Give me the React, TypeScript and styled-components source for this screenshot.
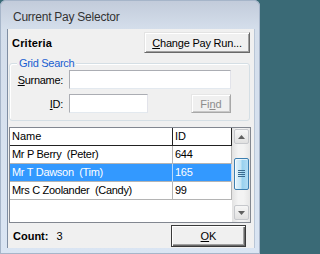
import React from "react";
import styled, { createGlobalStyle } from "styled-components";

const GlobalStyle = createGlobalStyle`
  html, body {
    margin: 0;
    padding: 0;
    background: #3a6a76;
  }
  body {
    font-family: "Liberation Sans", Arial, sans-serif;
    font-size: 11px;
    color: #000;
  }
`;

const rows = [
  { name: "Mr P Berry  (Peter)", id: "644", selected: false },
  { name: "Mr T Dawson  (Tim)", id: "165", selected: true },
  { name: "Mrs C Zoolander  (Candy)", id: "99", selected: false },
];

const App = () => {
  return (
    <>
      <GlobalStyle />
      <Window>
        <TitleBar>Current Pay Selector</TitleBar>
        <Client>
          <CriteriaRow>
            <Heading>Criteria</Heading>
            <ChangeButton>
              <u>C</u>hange Pay Run...
            </ChangeButton>
          </CriteriaRow>

          <Group>
            <Legend>Grid Search</Legend>
            <FormGrid>
              <Label>
                <u>S</u>urname:
              </Label>
              <TextBox />
              <Label>
                <u>I</u>D:
              </Label>
              <IdRow>
                <TextBox $width={79} />
                <FindButton disabled>
                  Fi<u>n</u>d
                </FindButton>
              </IdRow>
            </FormGrid>
          </Group>

          <DataGrid>
            <TableArea>
              <HeaderCell>Name</HeaderCell>
              <HeaderCell>ID</HeaderCell>
              {rows.map((r) => (
                <React.Fragment key={r.id}>
                  <Cell $selected={r.selected}>{r.name}</Cell>
                  <Cell $selected={r.selected}>{r.id}</Cell>
                </React.Fragment>
              ))}
            </TableArea>
            <ScrollBar>
              <ScrollButton>
                <Arrow direction="up" />
              </ScrollButton>
              <Thumb>
                <svg width="7" height="8" viewBox="0 0 7 8">
                  {[0, 2, 4, 6].map((y) => (
                    <rect key={y} x="0" y={y} width="7" height="1" fill="#3a6a90" />
                  ))}
                </svg>
              </Thumb>
              <ScrollButton $bottom>
                <Arrow direction="down" />
              </ScrollButton>
            </ScrollBar>
          </DataGrid>

          <Footer>
            <CountText>
              <b>Count:</b>
              <span>3</span>
            </CountText>
            <OkButton>
              <u>O</u>K
            </OkButton>
          </Footer>
        </Client>
      </Window>
    </>
  );
};

export default App;

const Arrow = ({ direction }: { direction: "up" | "down" }) => (
  <svg width="7" height="4" viewBox="0 0 7 4">
    <path
      d={direction === "up" ? "M0 4 L3.5 0 L7 4 Z" : "M0 0 L3.5 4 L7 0 Z"}
      fill="#606060"
    />
  </svg>
);

const Window = styled.div`
  width: 260px;
  height: 254px;
  box-sizing: border-box;
  display: flex;
  flex-direction: column;
  padding: 0 5px 6px 7px;
  border-radius: 6px 6px 0 0;
  background: linear-gradient(#c2cbda 0px, #d4deeb 29px, #dae5f3 100%);
  box-shadow: inset 0 0 0 1px #a6b5c9;
`;

const TitleBar = styled.div`
  height: 29px;
  box-sizing: border-box;
  padding: 9px 0 0 6px;
  font-size: 12px;
  line-height: 16px;
  letter-spacing: -0.25px;
  color: #333;
`;

const Client = styled.div`
  flex: 1;
  display: flex;
  flex-direction: column;
  background: #f0f0f0;
  border-left: 1px solid #7f8ea3;
  border-right: 1px solid #b9c6d6;
  padding: 3px 3px 1px 1px;
  min-height: 0;
`;

const CriteriaRow = styled.div`
  height: 21px;
  display: flex;
  align-items: center;
  justify-content: space-between;
  padding-left: 3px;
  margin-right: 1px;
`;

const Heading = styled.div`
  font-weight: bold;
  letter-spacing: 0.2px;
`;

const BaseButton = styled.button`
  font-family: "Liberation Sans", Arial, sans-serif;
  font-size: 11px;
  color: #000;
  background: #f0f0f0;
  border: 1px solid;
  border-color: #e3e3e3 #696969 #696969 #e3e3e3;
  box-shadow: inset 1px 1px #ffffff, inset -1px -1px #a0a0a0;
  padding: 0;
  margin: 0;
  box-sizing: border-box;
  display: flex;
  align-items: center;
  justify-content: center;
`;

const ChangeButton = styled(BaseButton)`
  width: 106px;
  height: 21px;
  letter-spacing: -0.2px;
`;

const Group = styled.div`
  position: relative;
  margin: 10px 1px 0 0;
  height: 58px;
  box-sizing: border-box;
  border: 1px solid #d5dfe5;
  border-radius: 3px;
  box-shadow: inset 1px 1px #fff;
  padding: 6px 0 7px 0;
`;

const Legend = styled.div`
  position: absolute;
  top: -8px;
  left: 7px;
  padding: 0 2px;
  background: #f0f0f0;
  color: #1a5fd0;
  line-height: 14px;
  letter-spacing: -0.3px;
`;

const FormGrid = styled.div`
  display: grid;
  grid-template-columns: 53px 162px;
  column-gap: 6px;
  row-gap: 5px;
  align-items: center;
`;

const Label = styled.div`
  text-align: right;
  letter-spacing: -0.3px;
`;

const TextBox = styled.input<{ $width?: number }>`
  width: ${(p) => (p.$width ? `${p.$width}px` : "100%")};
  height: 19px;
  box-sizing: border-box;
  margin: 0;
  border: 1px solid;
  border-color: #abadb3 #e2e3ea #e3e9ef #abadb3;
  background: #fff;
  outline: none;
`;

const IdRow = styled.div`
  display: flex;
  justify-content: space-between;
  align-items: center;
`;

const FindButton = styled(BaseButton)`
  width: 40px;
  height: 19px;
  color: #8d8d8d;
  border-color: #e6e6e6 #a8a8a8 #a8a8a8 #e6e6e6;
  box-shadow: inset 1px 1px #ffffff, inset -1px -1px #c8c8c8;
`;

const DataGrid = styled.div`
  margin-top: 6px;
  height: 96px;
  box-sizing: border-box;
  border: 1px solid #828790;
  background: #fff;
  display: flex;
`;

const TableArea = styled.div`
  width: 222px;
  display: grid;
  grid-template-columns: 163px 59px;
  grid-auto-rows: 18px;
  align-content: start;
`;

const HeaderCell = styled.div`
  box-sizing: border-box;
  border-right: 1px solid #222;
  border-bottom: 1px solid #222;
  padding-left: 2px;
  line-height: 17px;
  background: #fff;
`;

const Cell = styled.div<{ $selected?: boolean }>`
  box-sizing: border-box;
  border-right: 1px solid ${(p) => (p.$selected ? "#b8d8fb" : "#b4b4b4")};
  border-bottom: 1px solid #b4b4b4;
  padding-left: 2px;
  line-height: 17px;
  letter-spacing: -0.3px;
  white-space: pre;
  overflow: hidden;
  background: ${(p) => (p.$selected ? "#3399ff" : "#fff")};
  color: ${(p) => (p.$selected ? "#fff" : "#000")};
`;

const ScrollBar = styled.div`
  flex: 1;
  display: flex;
  flex-direction: column;
  padding: 1px 1px 1px 2px;
  background: linear-gradient(to right, #e2e2e2, #f3f3f3 35%, #f3f3f3 65%, #e6e6e6);
`;

const ScrollButton = styled.div<{ $bottom?: boolean }>`
  height: 15px;
  box-sizing: border-box;
  border: 1px solid #c6c8cc;
  border-radius: 2px;
  background: linear-gradient(#f6f6f6, #e1e1e1);
  display: flex;
  align-items: center;
  justify-content: center;
  margin-top: ${(p) => (p.$bottom ? "auto" : "0")};
  margin-bottom: ${(p) => (p.$bottom ? "1px" : "0")};
`;

const Thumb = styled.div`
  margin-top: 14px;
  height: 32px;
  box-sizing: border-box;
  border: 1px solid #3c7fb1;
  border-radius: 2px;
  background: linear-gradient(to right, #e5f4fc, #c4e5f6 45%, #98d1ef 55%, #b2dcf3);
  box-shadow: inset 1px 1px #ffffffaa;
  display: flex;
  align-items: center;
  justify-content: center;
`;

const Footer = styled.div`
  margin-top: 2px;
  height: 22px;
  display: flex;
  align-items: center;
  justify-content: space-between;
  padding-left: 4px;
  margin-right: 5px;
`;

const CountText = styled.div`
  display: flex;
  gap: 8px;
`;

const OkButton = styled(BaseButton)`
  width: 75px;
  height: 22px;
  border: 1px solid #3a3a3a;
  box-shadow: inset 1px 1px #ffffff, inset -1px -1px #696969, inset -2px -2px #a0a0a0;
`;
